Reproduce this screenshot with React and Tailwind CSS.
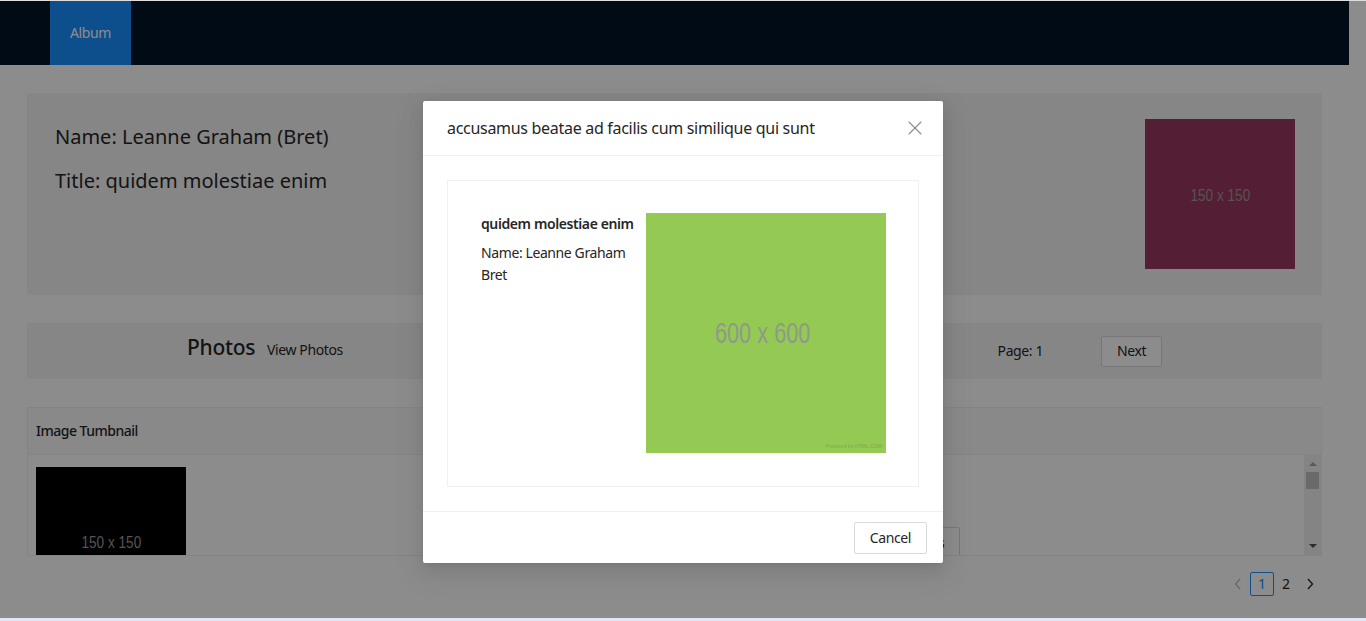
import { X } from 'lucide-react';

const font = { fontFamily: '"Noto Sans", "Open Sans", sans-serif' };

const Placeholder = ({ size, color, label, textClass }) => (
  <div
    className={`flex shrink-0 items-center justify-center ${size}`}
    style={{ backgroundColor: color }}
  >
    <span
      className={`scale-x-[0.8] text-[#999999] ${textClass}`}
      style={{ fontFamily: '"Liberation Sans", Arial, sans-serif' }}
    >
      {label}
    </span>
  </div>
);

const Chevron = ({ dir, muted }) => (
  <svg width="12" height="12" viewBox="0 0 12 12" fill="none">
    <path
      d={dir === 'left' ? 'M8 1 3.5 6 8 11' : 'M4 1 8.5 6 4 11'}
      stroke={muted ? '#bfbfbf' : '#262626'}
      strokeWidth="1.3"
    />
  </svg>
);

const PhotoModal = () => (
  <div className="absolute inset-0 flex justify-center pt-[100px]">
    <div className="h-[462px] w-[520px] rounded-[2px] bg-white shadow-[0_3px_6px_-4px_rgba(0,0,0,0.12),0_6px_16px_0_rgba(0,0,0,0.08),0_9px_28px_8px_rgba(0,0,0,0.05)]">
      {/* Header */}
      <div className="flex h-[55px] items-center justify-between border-b border-[#f0f0f0] pl-6 pr-4">
        <div className="text-base tracking-[-0.3px] text-[#262626]">accusamus beatae ad facilis cum similique qui sunt</div>
        <X size={24} strokeWidth={1.1} className="text-[#8c8c8c]" />
      </div>

      {/* Body */}
      <div className="p-6">
        <div className="flex border border-[#f0f0f0] pb-[33px] pl-[33px] pr-[32px] pt-[32px]">
          <div className="w-[165px] shrink-0 text-sm leading-[22px] tracking-[-0.4px] text-[#262626]">
            <div className="mb-[7px] font-semibold">quidem molestiae enim</div>
            <div>Name: Leanne Graham Bret</div>
          </div>
          <div className="relative flex h-[240px] w-[240px] shrink-0 items-center justify-center bg-[#94c954]">
            <span
              className="-translate-x-[3px] translate-y-[1px] scale-x-[0.75] text-[29px] text-[#8e9a88]"
              style={{ fontFamily: '"Liberation Sans", Arial, sans-serif' }}
            >
              600 x 600
            </span>
            <span
              className="absolute bottom-[3px] right-[4px] text-[5px] font-bold text-[#84b34a]"
              style={{ fontFamily: '"Liberation Sans", Arial, sans-serif' }}
            >
              Powered by HTML.COM
            </span>
          </div>
        </div>
      </div>

      {/* Footer */}
      <div className="flex h-[53px] items-center justify-end border-t border-[#f0f0f0] px-4">
        <button className="h-8 rounded-[2px] border border-[#d9d9d9] px-[15px] text-sm tracking-[-0.4px] text-[#262626]">
          Cancel
        </button>
      </div>
    </div>
  </div>
);

export default function App() {
  return (
    <div className="flex h-[621px] w-[1366px] flex-col overflow-hidden bg-white" style={font}>
      <div className="h-px bg-[#dedede]" />

      <div className="relative h-[617px] pr-[17px]">
        {/* Top nav */}
        <div className="flex h-16 bg-[#001529] pl-[50px]">
          <div className="flex items-center bg-[#1890ff] px-5 text-sm tracking-[-0.4px] text-white">Album</div>
        </div>

        <div className="flex flex-col gap-7 px-[27px] pt-7">
          {/* Album info */}
          <div className="flex h-[202px] justify-between bg-[#f5f5f5] pl-7 pr-[27px] pt-[26px]">
            <div className="pt-[4px] text-xl text-[#262626]">
              <div className="leading-7">Name: Leanne Graham (Bret)</div>
              <div className="mt-[16px] leading-7">Title: quidem molestiae enim</div>
            </div>
            <Placeholder size="h-[150px] w-[150px]" color="#993860" label="150 x 150" textClass="text-[17px] translate-y-[2px]" />
          </div>

          {/* Photos bar */}
          <div className="flex h-14 items-center bg-[#f5f5f5] px-[160px]">
            <div className="-mt-[6px] flex items-baseline gap-[12px]">
              <span className="text-[21px] font-medium tracking-[-0.3px] text-[#262626]">Photos</span>
              <span className="text-sm tracking-[-0.4px] text-[#262626]">View Photos</span>
            </div>
            <div className="flex-1" />
            <span className="text-sm tracking-[-0.4px] text-[#262626]">Page: 1</span>
            <button className="ml-[58px] h-[31px] w-[61px] rounded-[2px] border border-[#d9d9d9] bg-white text-sm tracking-[-0.4px] text-[#262626]">
              Next
            </button>
          </div>

          {/* Table */}
          <div className="flex flex-col">
            <div className="border border-[#f0f0f0] bg-white">
              <div className="flex h-[47px] items-center border-b border-[#f0f0f0] bg-[#fafafa] pl-[8px] text-sm font-medium tracking-[-0.5px] text-[#262626]">
                Image Tumbnail
              </div>
              <div className="flex h-[100px] overflow-hidden">
                <div className="flex flex-1 items-start pl-[8px] pt-[12px]">
                  <Placeholder size="h-[150px] w-[150px]" color="#000000" label="150 x 150" textClass="text-[17px] translate-y-[1px]" />
                  <div className="ml-[668px] mt-[60px]">
                    <button className="h-8 rounded-[2px] border border-[#d9d9d9] bg-white px-[15px] text-sm tracking-[-0.4px] text-[#262626]">
                      View Details
                    </button>
                  </div>
                </div>
                {/* scrollbar */}
                <div className="flex w-[17px] flex-col items-center bg-[#f1f1f1]">
                  <div className="mt-[7px] h-0 w-0 border-x-[4px] border-b-[4px] border-x-transparent border-b-[#a3a3a3]" />
                  <div className="mt-[6px] h-[17px] w-[13px] bg-[#c1c1c1]" />
                  <div className="flex-1" />
                  <div className="mb-[7px] h-0 w-0 border-x-[4px] border-t-[4px] border-x-transparent border-t-[#505050]" />
                </div>
              </div>
            </div>

            {/* Pagination */}
            <div className="mt-4 flex items-center justify-end text-sm text-[#262626]">
              <span className="flex h-6 w-6 items-center justify-center"><Chevron dir="left" muted /></span>
              <span className="flex h-6 w-6 items-center justify-center rounded-[2px] border border-[#1890ff] text-[#1890ff]">1</span>
              <span className="flex h-6 w-6 items-center justify-center">2</span>
              <span className="flex h-6 w-6 items-center justify-center"><Chevron dir="right" /></span>
            </div>
          </div>
        </div>

        {/* Mask */}
        <div className="absolute inset-0 bg-black/45" />
        <PhotoModal />
      </div>

      <div className="h-[3px] bg-[#e3e6f6]" />
    </div>
  );
}
